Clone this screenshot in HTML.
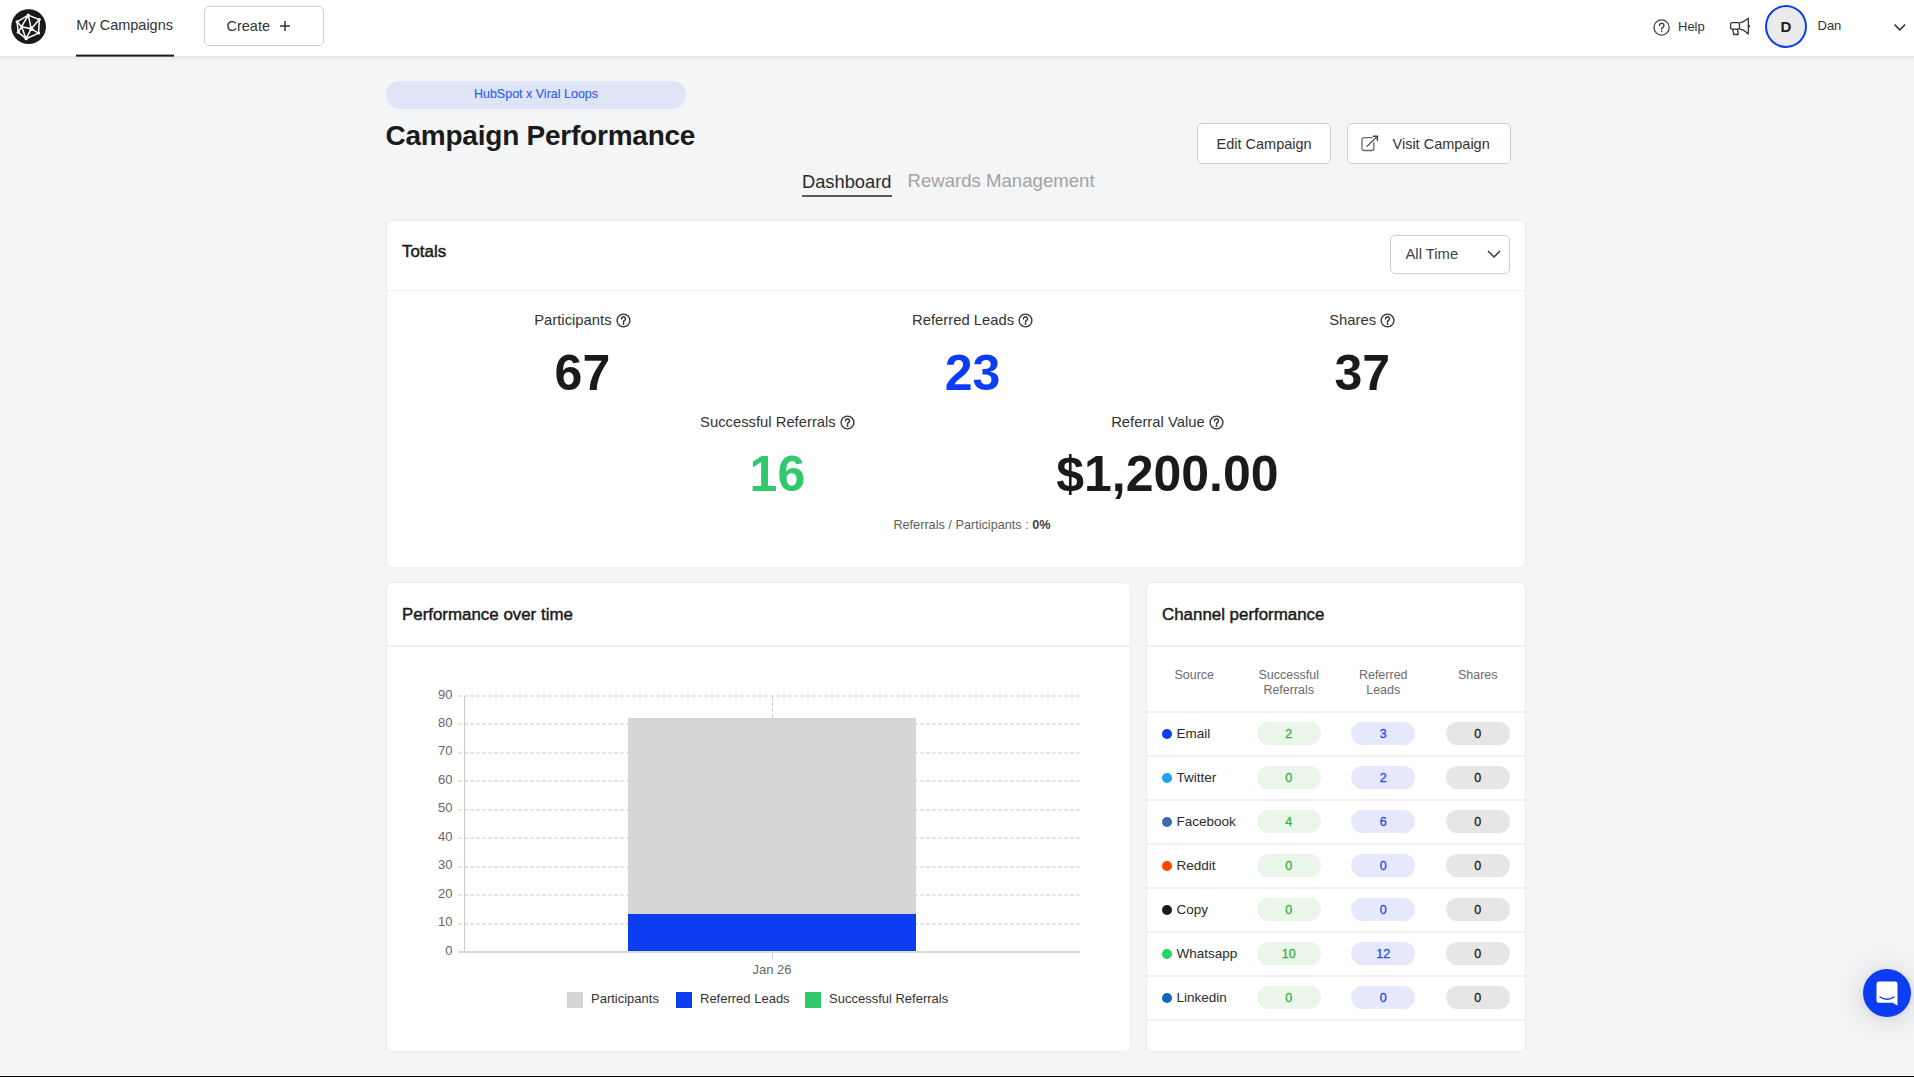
<!DOCTYPE html>
<html><head><meta charset="utf-8">
<style>
*{margin:0;padding:0;box-sizing:border-box}
html,body{width:1914px;height:1077px;overflow:hidden}
body{background:#f4f5f7;font-family:"Liberation Sans",sans-serif;color:#1a1a1a;position:relative}
.a{position:absolute;white-space:nowrap}
.nav{position:absolute;left:0;top:0;width:1914px;height:57px;background:#fff;border-bottom:1px solid #e4e5e8;box-shadow:0 1px 4px rgba(0,0,0,0.07)}
.btn{position:absolute;background:#fff;border:1px solid #cdcdcd;border-radius:5px}
.card{position:absolute;background:#fff;border:1px solid #eceef0;border-radius:7px}
.div{position:absolute;height:1px;background:#eef0f2}
.lbl{font-size:14.8px;line-height:14.8px;color:#333}
.num{font-size:50px;line-height:50px;font-weight:bold;color:#1a1a1a}
.q{display:inline-block;vertical-align:top}
.med{-webkit-text-stroke:0.45px currentColor}
.th{font-size:12.5px;line-height:15px;color:#6b6b6b;text-align:center}
.pill{position:absolute;width:64px;height:23px;border-radius:12px;font-size:12.5px;line-height:25px;text-align:center;-webkit-text-stroke:0.3px currentColor}
.g{background:#e9f6e9;color:#3aae48}
.b{background:#e5e9fb;color:#2a48ee}
.k{background:#e6e6e6;color:#1a1a1a}
.dot{position:absolute;width:10px;height:10px;border-radius:5px}
.src{font-size:13.5px;line-height:13.5px;color:#2a2a2a}
.row{position:absolute;left:1147px;width:378px;height:1px;background:#f0f1f3}
.yl{position:absolute;font-size:13px;line-height:13px;color:#666;text-align:right;width:30px}
.gl{position:absolute;left:458px;width:622px;height:2px;background-image:linear-gradient(to right,#e6e6e6 0,#e6e6e6 4px,transparent 4px,transparent 6px);background-size:6px 2px}
</style></head><body>
<div class="nav"></div>
<svg class="a" style="left:10px;top:8px" width="38" height="38" viewBox="0 0 38 38">
  <circle cx="18.6" cy="18.6" r="17.4" fill="#1a1a1a"/>
  <g stroke="#fff" stroke-width="1.5" fill="none" stroke-linejoin="round" stroke-linecap="round">
    <polygon points="18.3,7.1 29.3,11.6 28.6,25.1 16.1,30.7 8.3,24.3 7.1,13.8"/>
    <path d="M18.3 7.1L11.6 18.7M18.3 7.1L21.2 20.8M29.3 11.6L21.2 20.8M21.2 20.8L28.6 25.1M21.2 20.8L16.1 30.7M11.6 18.7L21.2 20.8M11.6 18.7L16.1 30.7M7.1 13.8L11.6 18.7M11.6 18.7L8.3 24.3"/>
  </g>
  <g fill="#fff"><circle cx="18.3" cy="7.1" r="1.6"/><circle cx="29.3" cy="11.6" r="1.5"/><circle cx="28.6" cy="25.1" r="1.5"/><circle cx="16.1" cy="30.7" r="1.6"/><circle cx="8.3" cy="24.3" r="1.5"/><circle cx="7.1" cy="13.8" r="1.5"/><circle cx="21.2" cy="20.8" r="2.2"/><circle cx="11.6" cy="18.7" r="1.3"/></g>
</svg>
<div class="a " style="left:76.3px;top:17.73px;font-size:14.5px;line-height:14.5px;color:#333;">My Campaigns</div>
<div class="a" style="left:76px;top:54px;width:98px;height:2px;background:#1a1a1a;transform:translateY(0.6px)"></div>
<div class="btn" style="left:204px;top:6px;width:120px;height:40px"></div>
<div class="a " style="left:226.5px;top:19.43px;font-size:14.5px;line-height:14.5px;color:#333;">Create</div>
<svg class="a" style="left:279px;top:20px" width="12" height="12"><path d="M6 1v10M1 6h10" stroke="#333" stroke-width="1.5"/></svg>
<svg class="a" style="left:1652px;top:17.5px" width="19" height="19" viewBox="0 0 19 19">
  <circle cx="9.6" cy="9.5" r="7.6" fill="none" stroke="#444" stroke-width="1.3"/>
  <path d="M7.5 7.6a2.2 2.2 0 1 1 2.9 2c-.5.3-.7.6-.7 1.2v.4" fill="none" stroke="#444" stroke-width="1.4" stroke-linecap="round"/>
  <circle cx="9.7" cy="13.3" r="0.85" fill="#444"/>
</svg>
<div class="a " style="left:1678px;top:20.30px;font-size:13px;line-height:13px;color:#333;">Help</div>
<svg class="a" style="left:1726px;top:14px" width="30" height="26" viewBox="0 0 30 26">
  <g fill="none" stroke="#333" stroke-width="1.3" stroke-linejoin="round">
    <rect x="4.6" y="8.7" width="8.9" height="6.5" rx="1.6"/>
    <path d="M13.5 8.7c2 0 3.8-.7 5.3-1.9L22.3 4.2V20L18.8 17.1c-1.5-1.2-3.3-1.9-5.3-1.9"/>
    <path d="M6.7 15.2l1 5.3h4.5l-.7-5.3"/>
  </g>
  <ellipse cx="23.2" cy="12.1" rx="0.9" ry="1.4" fill="#333"/>
</svg>
<div class="a" style="left:1765px;top:5px;width:42px;height:43px;border-radius:50%;border:2px solid #0d3df2;background:#ebebeb"></div>
<div class="a" style="left:1766px;top:18.70px;width:40px;text-align:center;font-size:15px;line-height:15px;font-weight:bold;color:#1a1a1a">D</div>
<div class="a " style="left:1817.5px;top:19.30px;font-size:13px;line-height:13px;color:#333;">Dan</div>
<svg class="a" style="left:1893px;top:23px" width="14" height="9"><path d="M1.5 1.5l5.3 5.3 5.3-5.3" fill="none" stroke="#333" stroke-width="1.6"/></svg>
<div class="a" style="left:386px;top:80.5px;width:300px;height:28px;border-radius:14px;background:#dfe5f7"></div>
<div class="a" style="left:386px;top:88.42px;width:300px;text-align:center;font-size:12.5px;line-height:12.5px;color:#2f5cf0;-webkit-text-stroke:0.15px currentColor">HubSpot x Viral Loops</div>
<div class="a " style="left:385.5px;top:122.00px;font-size:28px;line-height:28px;color:#1a1a1a;font-weight:bold;letter-spacing:-0.23px">Campaign Performance</div>
<div class="btn" style="left:1197px;top:123px;width:134px;height:41px"></div>
<div class="a " style="left:1216.5px;top:136.63px;font-size:14.5px;line-height:14.5px;color:#333;">Edit Campaign</div>
<div class="btn" style="left:1347px;top:123px;width:164px;height:41px"></div>
<svg class="a" style="left:1355px;top:130px" width="30" height="26" viewBox="0 0 30 26">
  <path d="M17.6 7.7H9a2 2 0 0 0-2 2v8.8a2 2 0 0 0 2 2h7.8a2 2 0 0 0 2-2V12.2" fill="none" stroke="#6a6a6a" stroke-width="1.3"/>
  <path d="M12.1 16.2L21.8 7" fill="none" stroke="#555" stroke-width="1.3" stroke-linecap="round"/>
  <path d="M18.4 6.3H22.4V10.4" fill="none" stroke="#444" stroke-width="1.4" stroke-linecap="round" stroke-linejoin="round"/>
</svg>
<div class="a " style="left:1392.5px;top:136.63px;font-size:14.5px;line-height:14.5px;color:#333;">Visit Campaign</div>
<div class="a " style="left:802px;top:172.71px;font-size:18.3px;line-height:18.3px;color:#2a2a2a;">Dashboard</div>
<div class="a" style="left:802px;top:195px;width:90px;height:2px;background:#5a5a5a"></div>
<div class="a " style="left:907.5px;top:172.46px;font-size:18.6px;line-height:18.6px;color:#a3a3a3;">Rewards Management</div>
<div class="card" style="left:386px;top:220px;width:1140px;height:348px"></div>
<div class="a med" style="left:402px;top:244.29px;font-size:16.9px;line-height:16.9px;color:#1a1a1a;">Totals</div>
<div class="div" style="left:387px;top:290px;width:1138px"></div>
<div class="btn" style="left:1390px;top:235px;width:120px;height:39px"></div>
<div class="a " style="left:1405.5px;top:247.27px;font-size:14.8px;line-height:14.8px;color:#3b3f4a;">All Time</div>
<svg class="a" style="left:1486px;top:249px" width="16" height="11"><path d="M2 2l6 6 6-6" fill="none" stroke="#3b3f4a" stroke-width="1.5"/></svg>
<div class="a lbl" style="left:382.4px;top:313.47px;width:400px;text-align:center">Participants<svg class="q" style="margin-left:4px;margin-top:-0.5px" width="15" height="15" viewBox="0 0 15 15"><circle cx="7.5" cy="7.5" r="6.4" fill="none" stroke="#333" stroke-width="1.35"/><path d="M5.5 5.9a2 2 0 1 1 2.7 1.8c-.5.2-.7.5-.7 1.1v.5" fill="none" stroke="#333" stroke-width="1.5" stroke-linecap="round"/><circle cx="7.5" cy="11" r="0.95" fill="#333"/></svg></div>
<div class="a num" style="left:382.4px;top:347.88px;width:400px;text-align:center;color:#1a1a1a">67</div>
<div class="a lbl" style="left:772.6px;top:313.47px;width:400px;text-align:center">Referred Leads<svg class="q" style="margin-left:4px;margin-top:-0.5px" width="15" height="15" viewBox="0 0 15 15"><circle cx="7.5" cy="7.5" r="6.4" fill="none" stroke="#333" stroke-width="1.35"/><path d="M5.5 5.9a2 2 0 1 1 2.7 1.8c-.5.2-.7.5-.7 1.1v.5" fill="none" stroke="#333" stroke-width="1.5" stroke-linecap="round"/><circle cx="7.5" cy="11" r="0.95" fill="#333"/></svg></div>
<div class="a num" style="left:772.6px;top:347.88px;width:400px;text-align:center;color:#0d3df2">23</div>
<div class="a lbl" style="left:1162.2px;top:313.47px;width:400px;text-align:center">Shares<svg class="q" style="margin-left:4px;margin-top:-0.5px" width="15" height="15" viewBox="0 0 15 15"><circle cx="7.5" cy="7.5" r="6.4" fill="none" stroke="#333" stroke-width="1.35"/><path d="M5.5 5.9a2 2 0 1 1 2.7 1.8c-.5.2-.7.5-.7 1.1v.5" fill="none" stroke="#333" stroke-width="1.5" stroke-linecap="round"/><circle cx="7.5" cy="11" r="0.95" fill="#333"/></svg></div>
<div class="a num" style="left:1162.2px;top:347.88px;width:400px;text-align:center;color:#1a1a1a">37</div>
<div class="a lbl" style="left:577.4px;top:415.47px;width:400px;text-align:center">Successful Referrals<svg class="q" style="margin-left:4px;margin-top:-0.5px" width="15" height="15" viewBox="0 0 15 15"><circle cx="7.5" cy="7.5" r="6.4" fill="none" stroke="#333" stroke-width="1.35"/><path d="M5.5 5.9a2 2 0 1 1 2.7 1.8c-.5.2-.7.5-.7 1.1v.5" fill="none" stroke="#333" stroke-width="1.5" stroke-linecap="round"/><circle cx="7.5" cy="11" r="0.95" fill="#333"/></svg></div>
<div class="a num" style="left:577.4px;top:449.28px;width:400px;text-align:center;color:#30c96e">16</div>
<div class="a lbl" style="left:967.4px;top:415.47px;width:400px;text-align:center">Referral Value<svg class="q" style="margin-left:4px;margin-top:-0.5px" width="15" height="15" viewBox="0 0 15 15"><circle cx="7.5" cy="7.5" r="6.4" fill="none" stroke="#333" stroke-width="1.35"/><path d="M5.5 5.9a2 2 0 1 1 2.7 1.8c-.5.2-.7.5-.7 1.1v.5" fill="none" stroke="#333" stroke-width="1.5" stroke-linecap="round"/><circle cx="7.5" cy="11" r="0.95" fill="#333"/></svg></div>
<div class="a num" style="left:967.4px;top:449.28px;width:400px;text-align:center;color:#1a1a1a">$1,200.00</div>
<div class="a" style="left:772px;top:519.25px;width:400px;text-align:center;font-size:12.7px;line-height:12.7px;color:#5e5e5e">Referrals / Participants : <b style="color:#444">0%</b></div>
<div class="card" style="left:386px;top:582px;width:745px;height:470px"></div>
<div class="a med" style="left:402px;top:607.09px;font-size:16.9px;line-height:16.9px;color:#1a1a1a;">Performance over time</div>
<div class="div" style="left:387px;top:645px;width:743px;height:2px"></div>
<div class="yl" style="left:422.5px;top:943.5px">0</div>
<div class="gl" style="top:922.6px"></div>
<div class="yl" style="left:422.5px;top:915.1px">10</div>
<div class="gl" style="top:894.1px"></div>
<div class="yl" style="left:422.5px;top:886.6px">20</div>
<div class="gl" style="top:865.7px"></div>
<div class="yl" style="left:422.5px;top:858.2px">30</div>
<div class="gl" style="top:837.2px"></div>
<div class="yl" style="left:422.5px;top:829.7px">40</div>
<div class="gl" style="top:808.8px"></div>
<div class="yl" style="left:422.5px;top:801.3px">50</div>
<div class="gl" style="top:780.3px"></div>
<div class="yl" style="left:422.5px;top:772.8px">60</div>
<div class="gl" style="top:751.9px"></div>
<div class="yl" style="left:422.5px;top:744.4px">70</div>
<div class="gl" style="top:723.4px"></div>
<div class="yl" style="left:422.5px;top:715.9px">80</div>
<div class="gl" style="top:695.0px"></div>
<div class="yl" style="left:422.5px;top:687.5px">90</div>
<div class="a" style="left:464px;top:696px;width:1px;height:256px;background:#c8c8c8"></div>
<div class="a" style="left:628px;top:718px;width:288px;height:234px;background:#d6d6d6"></div>
<div class="a" style="left:628px;top:914px;width:288px;height:38px;background:#0d3df2"></div>
<div class="a" style="left:772px;top:696px;width:1px;height:22px;background-image:linear-gradient(to bottom,#d0d0d0 0,#d0d0d0 4px,transparent 4px,transparent 6px);background-size:1px 6px"></div>
<div class="a" style="left:458px;top:951px;width:622px;height:2px;background:#dcdcdc"></div>
<div class="a" style="left:772px;top:952px;width:1px;height:7px;background:#c8c8c8"></div>
<div class="a" style="left:672px;top:962.60px;width:200px;text-align:center;font-size:13px;line-height:13px;color:#666">Jan 26</div>
<div class="a" style="left:567px;top:992px;width:16px;height:16px;background:#d6d6d6"></div>
<div class="a " style="left:591px;top:992.40px;font-size:13px;line-height:13px;color:#333;">Participants</div>
<div class="a" style="left:676px;top:992px;width:16px;height:16px;background:#0d3df2"></div>
<div class="a " style="left:700px;top:992.40px;font-size:13px;line-height:13px;color:#333;">Referred Leads</div>
<div class="a" style="left:805px;top:992px;width:16px;height:16px;background:#30c96e"></div>
<div class="a " style="left:829px;top:992.40px;font-size:13px;line-height:13px;color:#333;">Successful Referrals</div>
<div class="card" style="left:1146px;top:582px;width:380px;height:470px"></div>
<div class="a med" style="left:1162px;top:607.09px;font-size:16.9px;line-height:16.9px;color:#1a1a1a;">Channel performance</div>
<div class="div" style="left:1147px;top:645px;width:378px;height:2px"></div>
<div class="a th" style="left:1147.25px;top:667.8px;width:94px">Source</div>
<div class="a th" style="left:1241.75px;top:667.8px;width:94px">Successful<br>Referrals</div>
<div class="a th" style="left:1336.25px;top:667.8px;width:94px">Referred<br>Leads</div>
<div class="a th" style="left:1430.75px;top:667.8px;width:94px">Shares</div>
<div class="row" style="top:711px;height:2px"></div>
<div class="dot" style="left:1162px;top:728.5px;background:#0d3df2"></div>
<div class="a " style="left:1176.5px;top:727.17px;font-size:13.5px;line-height:13.5px;color:#2a2a2a;">Email</div>
<div class="pill g" style="left:1256.75px;top:722.3px">2</div>
<div class="pill b" style="left:1351.25px;top:722.3px">3</div>
<div class="pill k" style="left:1445.75px;top:722.3px">0</div>
<div class="row" style="top:755px;height:2px"></div>
<div class="dot" style="left:1162px;top:772.5px;background:#1da1f2"></div>
<div class="a " style="left:1176.5px;top:771.17px;font-size:13.5px;line-height:13.5px;color:#2a2a2a;">Twitter</div>
<div class="pill g" style="left:1256.75px;top:766.3px">0</div>
<div class="pill b" style="left:1351.25px;top:766.3px">2</div>
<div class="pill k" style="left:1445.75px;top:766.3px">0</div>
<div class="row" style="top:799px;height:2px"></div>
<div class="dot" style="left:1162px;top:816.5px;background:#4267b2"></div>
<div class="a " style="left:1176.5px;top:815.17px;font-size:13.5px;line-height:13.5px;color:#2a2a2a;">Facebook</div>
<div class="pill g" style="left:1256.75px;top:810.3px">4</div>
<div class="pill b" style="left:1351.25px;top:810.3px">6</div>
<div class="pill k" style="left:1445.75px;top:810.3px">0</div>
<div class="row" style="top:843px;height:2px"></div>
<div class="dot" style="left:1162px;top:860.5px;background:#ff4500"></div>
<div class="a " style="left:1176.5px;top:859.17px;font-size:13.5px;line-height:13.5px;color:#2a2a2a;">Reddit</div>
<div class="pill g" style="left:1256.75px;top:854.3px">0</div>
<div class="pill b" style="left:1351.25px;top:854.3px">0</div>
<div class="pill k" style="left:1445.75px;top:854.3px">0</div>
<div class="row" style="top:887px;height:2px"></div>
<div class="dot" style="left:1162px;top:904.5px;background:#1a1a1a"></div>
<div class="a " style="left:1176.5px;top:903.17px;font-size:13.5px;line-height:13.5px;color:#2a2a2a;">Copy</div>
<div class="pill g" style="left:1256.75px;top:898.3px">0</div>
<div class="pill b" style="left:1351.25px;top:898.3px">0</div>
<div class="pill k" style="left:1445.75px;top:898.3px">0</div>
<div class="row" style="top:931px;height:2px"></div>
<div class="dot" style="left:1162px;top:948.5px;background:#25d366"></div>
<div class="a " style="left:1176.5px;top:947.17px;font-size:13.5px;line-height:13.5px;color:#2a2a2a;">Whatsapp</div>
<div class="pill g" style="left:1256.75px;top:942.3px">10</div>
<div class="pill b" style="left:1351.25px;top:942.3px">12</div>
<div class="pill k" style="left:1445.75px;top:942.3px">0</div>
<div class="row" style="top:975px;height:2px"></div>
<div class="dot" style="left:1162px;top:992.5px;background:#0a66c2"></div>
<div class="a " style="left:1176.5px;top:991.17px;font-size:13.5px;line-height:13.5px;color:#2a2a2a;">Linkedin</div>
<div class="pill g" style="left:1256.75px;top:986.3px">0</div>
<div class="pill b" style="left:1351.25px;top:986.3px">0</div>
<div class="pill k" style="left:1445.75px;top:986.3px">0</div>
<div class="row" style="top:1019px;height:2px"></div>
<div class="a" style="left:1863px;top:969px;width:48px;height:48px;border-radius:50%;background:#0d3df2;box-shadow:0 1px 6px rgba(0,0,0,0.06),0 2px 32px rgba(0,0,0,0.16)"></div>
<svg class="a" style="left:1876px;top:981px" width="22" height="25" viewBox="0 0 22 25"><path d="M3 0.5h16a2.5 2.5 0 0 1 2.5 2.5v21.5l-5-2.8H3A2.5 2.5 0 0 1 .5 19.2V3A2.5 2.5 0 0 1 3 .5z" fill="#fff"/><path d="M4 16c4 3 10 3 14 0" fill="none" stroke="#0d3df2" stroke-width="1.3" stroke-linecap="round"/></svg>
<div class="a" style="left:0;top:1075px;width:1914px;height:1px;background:#fff"></div>
<div class="a" style="left:0;top:1076px;width:1914px;height:1px;background:#000"></div>
</body></html>
